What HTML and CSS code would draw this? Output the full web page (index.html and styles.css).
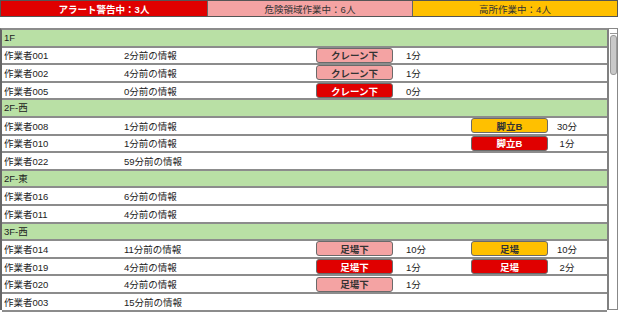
FILE: index.html
```html
<!DOCTYPE html>
<html lang="ja">
<head>
<meta charset="utf-8">
<link rel="stylesheet" href="styles.css">
</head>
<body>
<div class="banner">
  <div class="seg seg-red">アラート警告中：3人</div>
  <div class="seg seg-pink">危険領域作業中：6人</div>
  <div class="seg seg-yellow">高所作業中：4人</div>
</div>
<div class="panel">
  <div class="list">
    <div class="row area">1F</div>
    <div class="row"><span class="name">作業者001</span><span class="info">2分前の情報</span><span class="badge pink">クレーン下</span><span class="min1">1分</span></div>
    <div class="row"><span class="name">作業者002</span><span class="info">4分前の情報</span><span class="badge pink">クレーン下</span><span class="min1">1分</span></div>
    <div class="row"><span class="name">作業者005</span><span class="info">0分前の情報</span><span class="badge red">クレーン下</span><span class="min1">0分</span></div>
    <div class="row area">2F-西</div>
    <div class="row"><span class="name">作業者008</span><span class="info">1分前の情報</span><span class="empty"></span><span class="empty"></span><span class="badge yellow">脚立B</span><span class="min2">30分</span></div>
    <div class="row"><span class="name">作業者010</span><span class="info">1分前の情報</span><span class="empty"></span><span class="empty"></span><span class="badge red">脚立B</span><span class="min2">1分</span></div>
    <div class="row"><span class="name">作業者022</span><span class="info">59分前の情報</span></div>
    <div class="row area">2F-東</div>
    <div class="row"><span class="name">作業者016</span><span class="info">6分前の情報</span></div>
    <div class="row"><span class="name">作業者011</span><span class="info">4分前の情報</span></div>
    <div class="row area">3F-西</div>
    <div class="row"><span class="name">作業者014</span><span class="info">11分前の情報</span><span class="badge pink">足場下</span><span class="min1">10分</span><span class="badge yellow">足場</span><span class="min2">10分</span></div>
    <div class="row"><span class="name">作業者019</span><span class="info">4分前の情報</span><span class="badge red">足場下</span><span class="min1">1分</span><span class="badge red">足場</span><span class="min2">2分</span></div>
    <div class="row"><span class="name">作業者020</span><span class="info">4分前の情報</span><span class="badge pink">足場下</span><span class="min1">1分</span></div>
    <div class="row"><span class="name">作業者003</span><span class="info">15分前の情報</span></div>
  </div>
  <div class="scrollbar">
    <div class="arrow"></div>
    <div class="thumb"></div>
  </div>
</div>
</body>
</html>
```
FILE: styles.css
```css
* { box-sizing: border-box; }
html, body {
  margin: 0;
  padding: 0;
  background: #ffffff;
}
body {
  width: 620px;
  height: 313px;
  overflow: hidden;
  font-family: "Liberation Sans", "Noto Sans CJK JP", sans-serif;
  font-size: 9.5px;
  color: #222;
}
.banner {
  display: flex;
  height: 17px;
  margin: 0 2px 0 0;
  border: 1px solid #555;
}
.seg {
  display: flex;
  align-items: center;
  justify-content: center;
  border-right: 1px solid #666;
}
.seg:last-child { border-right: none; }
.seg-red {
  width: 207px;
  background: #e00000;
  color: #fff;
  font-weight: bold;
}
.seg-pink {
  width: 205px;
  background: #f4a3a3;
  color: #333;
}
.seg-yellow {
  flex: 1;
  background: #ffc000;
  color: #333;
}
.panel {
  display: flex;
  margin-top: 11px;
  height: 282px;
  width: 619px;
}
.list {
  width: 609px;
  border-left: 2px solid #666;
  border-top: 2px solid #8c8c8c;
  border-right: 2px solid #808080;
}
.row {
  display: grid;
  grid-template-columns: 119px 193px 77px 78px 77px 38px;
  align-items: center;
  height: 17.6px;
  border-bottom: 2px solid #8c8c8c;
  padding-left: 2px;
  background: #fff;
  white-space: nowrap;
}
.row.area {
  display: block;
  line-height: 15px;
  background: #b9e0a5;
  font-size: 9.5px;
}
.info { padding-left: 1px; }
.badge {
  height: 15px;
  border: 1.5px solid #6a6a6a;
  border-radius: 3px;
  display: flex;
  align-items: center;
  justify-content: center;
  font-weight: bold;
  font-size: 9.5px;
}
.badge.pink { background: #f4a3a3; color: #333; }
.badge.red { background: #e00000; color: #fff; }
.badge.yellow { background: #ffc000; color: #333; }
.min1 { padding-left: 13px; }
.min2 { text-align: center; }
.scrollbar {
  width: 9px;
  border: 1px solid #888;
  border-left: none;
  background: #fff;
  display: flex;
  flex-direction: column;
  align-items: center;
}
.arrow {
  width: 7px;
  height: 5px;
  border-bottom: 1px solid #999;
}
.thumb {
  width: 7px;
  height: 40px;
  margin-top: 1px;
  background: #c8c8c8;
  border: 1px solid #999;
  border-radius: 3px;
}
```
